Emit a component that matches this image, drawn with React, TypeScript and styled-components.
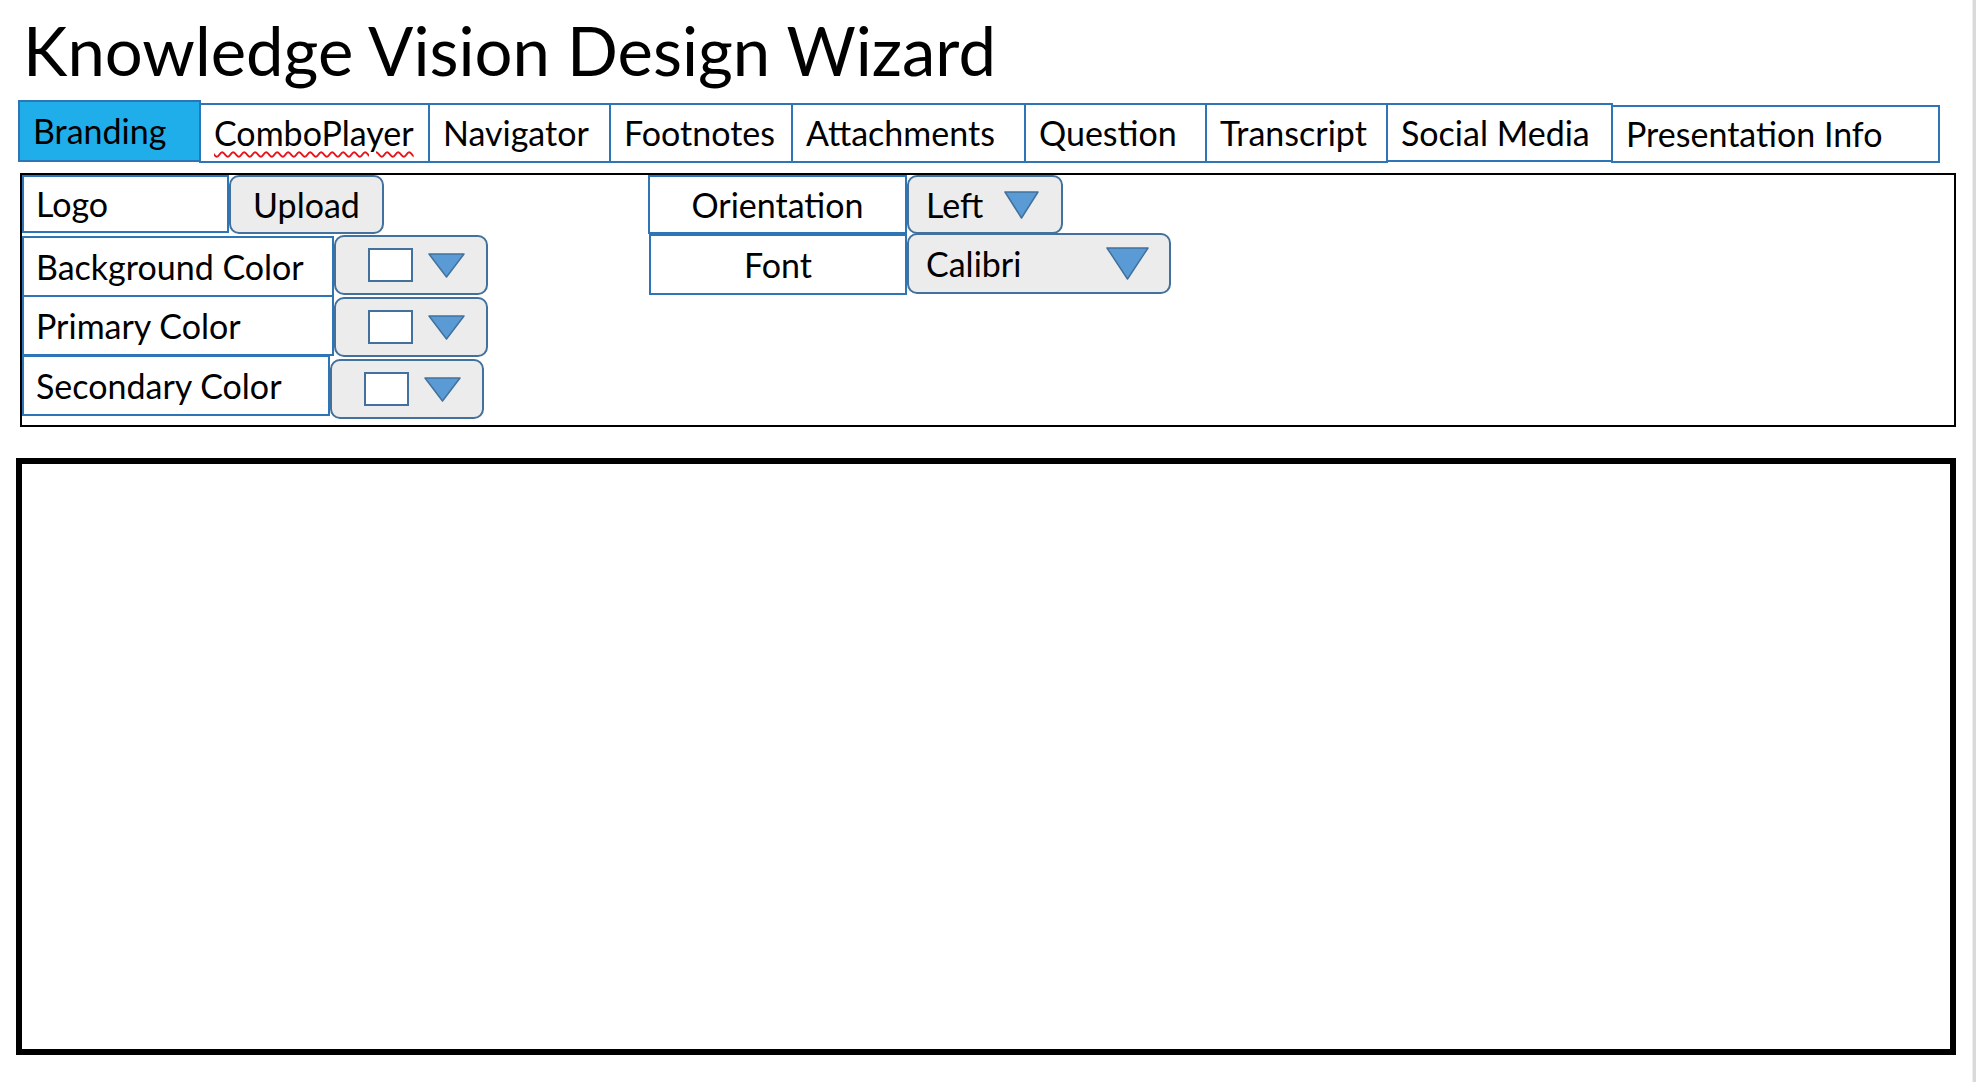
import React from "react";
import styled, { createGlobalStyle } from "styled-components";

const GlobalStyle = createGlobalStyle`
  html, body { margin: 0; padding: 0; background: #ffffff; }
  body { font-family: Lato, "Open Sans", "Liberation Sans", sans-serif; color: #000; }
  *, *::before, *::after { box-sizing: border-box; }
`;

const Page = styled.div`
  display: flex;
  width: 1976px;
  min-height: 1082px;
`;

const Main = styled.main`
  flex: 1;
  display: flex;
  flex-direction: column;
  padding: 17px 16px 0 16px;
`;

const EdgeStrip = styled.div`
  width: 4px;
  background: #dadada;
  border-left: 1px solid #efefef;
`;

const Title = styled.h1`
  margin: 0 0 16px 7px;
  font-family: Lato, sans-serif;
  font-weight: 400;
  font-size: 67px;
  line-height: 67px;
  white-space: nowrap;
`;

const TabBar = styled.nav`
  display: flex;
  align-items: flex-start;
  height: 63px;
  margin-left: 2px;
`;

const Tab = styled.div<{ $w: number; $top: number; $h: number; $active?: boolean }>`
  width: ${(p) => p.$w}px;
  height: ${(p) => p.$h}px;
  margin-top: ${(p) => p.$top}px;
  margin-left: -2px;
  &:first-child { margin-left: 0; }
  display: flex;
  align-items: center;
  padding-left: 13px;
  border: 2px solid #2e75b6;
  background: ${(p) => (p.$active ? "#1faeea" : "#ffffff")};
  font-size: 34px;
  line-height: 1;
  white-space: nowrap;
`;

const Misspelled = styled.span`
  text-decoration: underline wavy #e8141b;
  text-decoration-thickness: 1.5px;
  text-underline-offset: 5px;
`;

const Panel = styled.section`
  margin: 10px 0 0 4px;
  height: 254px;
  border: 2px solid #000;
  display: flex;
  align-items: flex-start;
`;

const FieldGroup = styled.div<{ $offset?: number }>`
  display: flex;
  flex-direction: column;
  margin-left: ${(p) => p.$offset ?? 0}px;
`;

const FieldRow = styled.div<{ $shift?: number; $indent?: number }>`
  display: flex;
  align-items: flex-start;
  margin-top: ${(p) => p.$shift ?? 0}px;
  margin-left: ${(p) => p.$indent ?? 0}px;
`;

const FieldLabel = styled.div<{ $w: number; $h: number; $center?: boolean }>`
  width: ${(p) => p.$w}px;
  height: ${(p) => p.$h}px;
  border: 2px solid #2e75b6;
  background: #fff;
  display: flex;
  align-items: center;
  justify-content: ${(p) => (p.$center ? "center" : "flex-start")};
  padding-left: ${(p) => (p.$center ? 0 : 12)}px;
  font-size: 34px;
  line-height: 1;
  white-space: nowrap;
`;

const ControlBox = styled.div<{ $w: number; $h: number; $shift?: number }>`
  width: ${(p) => p.$w}px;
  height: ${(p) => p.$h}px;
  margin-top: ${(p) => p.$shift ?? 0}px;
  background: #ececec;
  border: 2px solid #41719c;
  border-radius: 10px;
  display: flex;
  align-items: center;
  font-size: 34px;
  line-height: 1;
  white-space: nowrap;
`;

const UploadButton = styled(ControlBox)`
  justify-content: center;
`;

const ColorSelect = styled(ControlBox)`
  padding-left: 32px;
  gap: 15px;
`;

const TextSelect = styled(ControlBox)<{ $caretPad?: number }>`
  justify-content: space-between;
  padding: 0 ${(p) => p.$caretPad ?? 20}px 0 17px;
`;

const Swatch = styled.div`
  width: 45px;
  height: 34px;
  background: #fff;
  border: 2px solid #41719c;
`;

const Preview = styled.section`
  margin-top: 31px;
  height: 597px;
  border: 6px solid #000;
  background: #fff;
`;

function Caret({ w, h }: { w: number; h: number }) {
  return (
    <svg width={w} height={h} viewBox={`0 0 ${w} ${h}`}>
      <polygon
        points={`1,1 ${w - 1},1 ${w / 2},${h - 1}`}
        fill="#5b9bd5"
        stroke="#41719c"
        strokeWidth={1.5}
        strokeLinejoin="round"
      />
    </svg>
  );
}

const tabs = [
  { label: "Branding", w: 183, top: 0, h: 62, active: true },
  { label: "ComboPlayer", w: 231, top: 3, h: 60, spell: true },
  { label: "Navigator", w: 183, top: 3, h: 60 },
  { label: "Footnotes", w: 184, top: 3, h: 60 },
  { label: "Attachments", w: 235, top: 3, h: 60 },
  { label: "Question", w: 183, top: 3, h: 60 },
  { label: "Transcript", w: 183, top: 3, h: 60 },
  { label: "Social Media", w: 227, top: 3, h: 59 },
  { label: "Presentation Info", w: 329, top: 5, h: 58 },
];

const colorRows = [
  { label: "Background Color", w: 312, shift: 2, ctrlShift: -1 },
  { label: "Primary Color", w: 312, shift: -2, ctrlShift: 2 },
  { label: "Secondary Color", w: 308, shift: -2, ctrlShift: 4 },
];

export default function App() {
  return (
    <>
      <GlobalStyle />
      <Page>
        <Main>
          <Title>Knowledge Vision Design Wizard</Title>
          <TabBar>
            {tabs.map((t) => (
              <Tab key={t.label} $w={t.w} $top={t.top} $h={t.h} $active={t.active}>
                {t.spell ? <Misspelled>{t.label}</Misspelled> : t.label}
              </Tab>
            ))}
          </TabBar>
          <Panel>
            <FieldGroup>
              <FieldRow>
                <FieldLabel $w={207} $h={58}>Logo</FieldLabel>
                <UploadButton $w={155} $h={59}>Upload</UploadButton>
              </FieldRow>
              {colorRows.map((r) => (
                <FieldRow key={r.label} $shift={r.shift}>
                  <FieldLabel $w={r.w} $h={61}>{r.label}</FieldLabel>
                  <ColorSelect $w={154} $h={60} $shift={r.ctrlShift}>
                    <Swatch />
                    <Caret w={37} h={25} />
                  </ColorSelect>
                </FieldRow>
              ))}
            </FieldGroup>
            <FieldGroup $offset={160}>
              <FieldRow>
                <FieldLabel $w={259} $h={59} $center>Orientation</FieldLabel>
                <TextSelect $w={156} $h={59} $caretPad={22}>
                  <span>Left</span>
                  <Caret w={35} h={28} />
                </TextSelect>
              </FieldRow>
              <FieldRow $indent={1}>
                <FieldLabel $w={258} $h={61} $center>Font</FieldLabel>
                <TextSelect $w={264} $h={61} $shift={-1} $caretPad={20}>
                  <span>Calibri</span>
                  <Caret w={43} h={33} />
                </TextSelect>
              </FieldRow>
            </FieldGroup>
          </Panel>
          <Preview />
        </Main>
        <EdgeStrip />
      </Page>
    </>
  );
}
